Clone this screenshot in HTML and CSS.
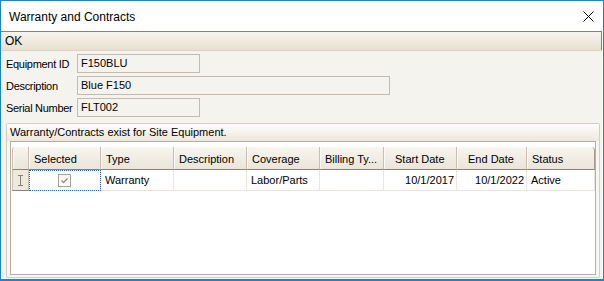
FILE: index.html
```html
<!DOCTYPE html>
<html lang="en">

<head>
    <meta charset="UTF-8">
    <meta name="viewport" content="width=device-width, initial-scale=1.0">
    <link rel="stylesheet" href="styles.css">
</head>

<body>
    <div class="window">
        <div class="titlebar">
            <span class="title">Warranty and Contracts</span>
            <svg class="close" width="11" height="11" viewBox="0 0 11 11">
                <path d="M0.5 0.5 L10.5 10.5 M10.5 0.5 L0.5 10.5" stroke="#000" stroke-width="1" fill="none" />
            </svg>
        </div>

        <div class="toolbar">OK</div>

        <div class="client">
            <div class="fields">
                <div class="field-row">
                    <span class="label">Equipment ID</span>
                    <div class="box short">F150BLU</div>
                </div>
                <div class="field-row">
                    <span class="label">Description</span>
                    <div class="box long">Blue F150</div>
                </div>
                <div class="field-row">
                    <span class="label">Serial Number</span>
                    <div class="box short">FLT002</div>
                </div>
            </div>

            <div class="group">
                <div class="group-head">Warranty/Contracts exist for Site Equipment.</div>
                <div class="group-body">
                    <div class="grid">
                        <table>
                            <colgroup>
                                <col class="c-rh">
                                <col class="c-sel">
                                <col class="c-type">
                                <col class="c-desc">
                                <col class="c-cov">
                                <col class="c-bill">
                                <col class="c-start">
                                <col class="c-end">
                                <col class="c-status">
                            </colgroup>
                            <thead>
                                <tr>
                                    <th class="rh corner"></th>
                                    <th>Selected</th>
                                    <th>Type</th>
                                    <th>Description</th>
                                    <th>Coverage</th>
                                    <th>Billing Ty...</th>
                                    <th class="pad">Start Date</th>
                                    <th class="pad">End Date</th>
                                    <th class="last">Status</th>
                                </tr>
                            </thead>
                            <tbody>
                                <tr>
                                    <td class="rh">
                                        <svg width="7" height="11" viewBox="0 0 7 11">
                                            <path d="M1 0.5 H6 M1 10.5 H6 M3.5 0.5 V10.5" stroke="#8a7f76" stroke-width="1" fill="none" />
                                        </svg>
                                    </td>
                                    <td class="focus">
                                        <span class="check">
                                            <svg width="9" height="9" viewBox="0 0 9 9">
                                                <path d="M1.5 4.5 L3.5 6.5 L7.5 2.5" stroke="#8a8480" stroke-width="1.2" fill="none" />
                                            </svg>
                                        </span>
                                    </td>
                                    <td>Warranty</td>
                                    <td></td>
                                    <td>Labor/Parts</td>
                                    <td></td>
                                    <td class="num">10/1/2017</td>
                                    <td class="num">10/1/2022</td>
                                    <td>Active</td>
                                </tr>
                            </tbody>
                        </table>
                    </div>
                </div>
            </div>
        </div>
    </div>
</body>

</html>
```

FILE: styles.css
```css
body {
    margin: 0;
    padding: 0;
    font-family: "Liberation Sans", Arial, sans-serif;
    font-size: 11px;
    color: #000;
    background: #fff;
}

.window {
    box-sizing: border-box;
    width: 604px;
    height: 281px;
    border: 1px solid #1883d7;
    border-bottom-width: 2px;
    display: flex;
    flex-direction: column;
    background: #fbfaf7;
}

.titlebar {
    height: 30px;
    display: flex;
    align-items: center;
    justify-content: space-between;
    padding: 0 9px 0 8px;
    background: #fff;
}

.title {
    font-size: 12px;
    padding-top: 1px;
}

.close {
    display: block;
    margin-top: 1px;
}

.toolbar {
    height: 18px;
    line-height: 18px;
    padding-left: 4px;
    font-size: 12px;
    border-top: 1px solid #8e8075;
    border-right: 1px solid #8e8075;
    margin-right: 1px;
    background: linear-gradient(#f7f5f0, #e7e0d0);
}

.client {
    flex: 1;
    margin: 0 1px 0 1px;
    border-top: 1px solid #d8d2c8;
    background: #f5f3ee;
    padding: 3px 2px 1px 3px;
    display: flex;
    flex-direction: column;
}

.fields {
    display: flex;
    flex-direction: column;
    gap: 3px;
}

.field-row {
    display: flex;
    align-items: center;
    height: 19px;
}

.label {
    width: 71px;
    padding-left: 1px;
    letter-spacing: -0.3px;
}

.box {
    box-sizing: border-box;
    height: 19px;
    line-height: 17px;
    padding-left: 3px;
    border: 1px solid #c6bab0;
    background: #f5f3ee;
}

.box.short {
    width: 123px;
}

.box.long {
    width: 313px;
}

.group {
    flex: 1;
    margin-top: 6px;
    margin-left: 1px;
    border: 1px solid #d6cec3;
    border-radius: 2px;
    display: flex;
    flex-direction: column;
    background: #f8f6f1;
}

.group-head {
    height: 17px;
    line-height: 17px;
    padding-left: 3px;
    background: linear-gradient(#fefefd, #ede7db);
}

.group-body {
    flex: 1;
    padding: 0 3px 2px 3px;
    display: flex;
}

.grid {
    flex: 1;
    border: 1px solid #b9ada3;
    background: #fff;
    padding: 5px 0 0 1px;
}

.grid table {
    table-layout: fixed;
    border-collapse: separate;
    border-spacing: 0;
    width: 583px;
}

.c-rh { width: 17px; }
.c-sel { width: 72px; }
.c-type { width: 73px; }
.c-desc { width: 73px; }
.c-cov { width: 73px; }
.c-bill { width: 64px; }
.c-start { width: 73px; }
.c-end { width: 70px; }
.c-status { width: 68px; }

.grid th {
    height: 21px;
    padding: 1px 0 0 5px;
    font-weight: normal;
    text-align: left;
    white-space: nowrap;
    overflow: hidden;
    background: linear-gradient(#f7f5ef, #ebe5d9);
    border-right: 1px solid #c9beb1;
    border-bottom: 1px solid #8f8377;
    box-shadow: inset 1px 0 0 #fbfaf6;
}

.grid th.pad {
    padding-left: 11px;
}

.grid th.corner {
    border-top-left-radius: 3px;
    border-left: 1px solid #c9beb1;
}

.grid th.last {
    border-top-right-radius: 4px;
    border-right: 1px solid #a59a8f;
}

.grid td {
    height: 20px;
    padding: 0 0 0 4px;
    white-space: nowrap;
    overflow: hidden;
    border-right: 1px solid #ebe5da;
    border-bottom: 1px solid #ebe5da;
}

.grid td.rh {
    padding: 0;
    text-align: center;
    background: #eee9df;
    border-left: 1px solid #c9beb1;
    border-right: 1px solid #c9beb1;
    border-bottom: 1px solid #8f8377;
}

.grid td.rh svg {
    display: block;
    margin: 0 auto;
}

.grid td.focus {
    padding: 0;
    text-align: center;
    outline: 1px dotted #2f5fb8;
    outline-offset: -1px;
}

.check {
    display: inline-flex;
    align-items: center;
    justify-content: center;
    box-sizing: border-box;
    width: 13px;
    height: 13px;
    vertical-align: middle;
    border: 1px solid #a8a09a;
    background: linear-gradient(#f4f2ee, #fff);
}

.check svg {
    display: block;
}

.grid td.num {
    text-align: right;
    padding: 0 2px 0 0;
}
```
